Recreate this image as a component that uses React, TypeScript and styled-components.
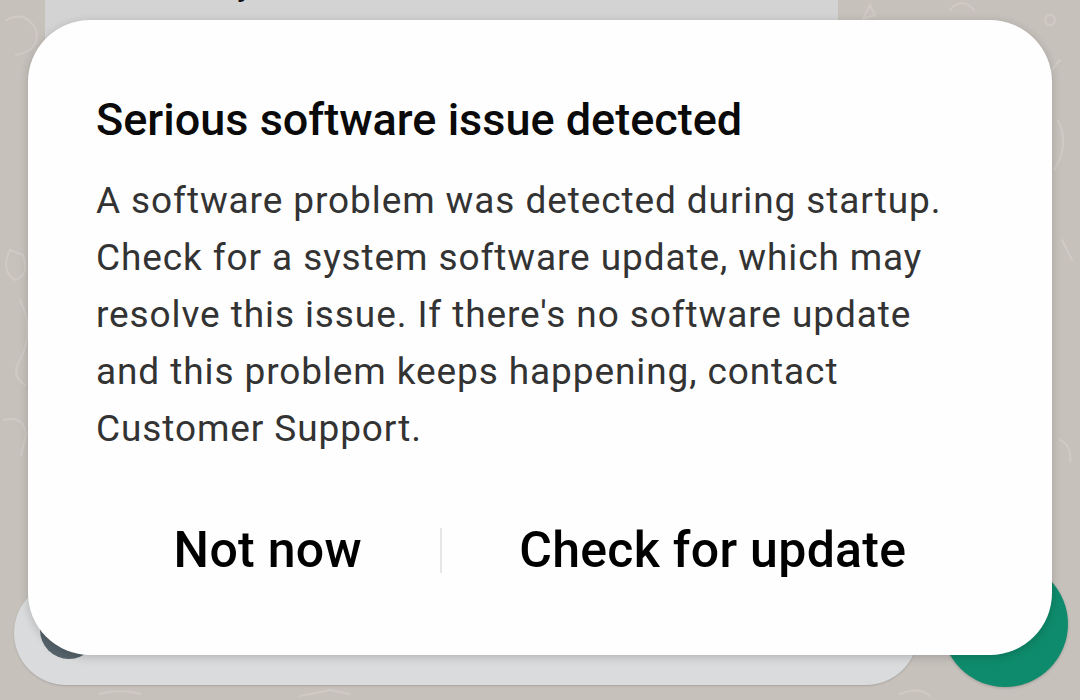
import styled, { createGlobalStyle } from "styled-components";

const GlobalStyle = createGlobalStyle`
  html, body {
    margin: 0;
    padding: 0;
    background: #c7c1bc;
  }
  * {
    box-sizing: border-box;
  }
`

const Doodles = () => (
  <DoodleLayer viewBox="0 0 1080 700" preserveAspectRatio="none">
    <g fill="none" stroke="#d0cac5" strokeWidth="2" strokeLinecap="round">
      <path d="M6 20 q20 -10 30 10 q5 20 -20 25" />
      <path d="M10 250 q-10 20 5 30 q15 -5 8 -25 z" />
      <path d="M20 300 q15 30 0 60 q-10 15 5 25" />
      <path d="M4 420 q20 -5 22 15 l-5 20" />
      <path d="M870 5 l5 10 l-12 4 z" />
      <path d="M950 10 q12 -14 24 0" />
      <circle cx="1050" cy="20" r="5" />
      <path d="M1060 60 q-20 20 -10 50" />
      <path d="M1058 120 q12 25 -4 50" />
      <path d="M1062 240 l10 20" />
      <path d="M1060 440 q12 5 10 22" />
      <path d="M100 694 q20 -6 40 0" />
      <path d="M300 696 l30 -6 l20 4" />
      <path d="M900 694 q20 -8 30 2" />
    </g>
  </DoodleLayer>
)

export default function App() {
  return (
    <>
      <GlobalStyle />
      <Screen>
        <Doodles />

        <ChatCard>
          <ChatLine>Today</ChatLine>
        </ChatCard>

        <Composer>
          <InputBar>
            <EmojiDot />
          </InputBar>
          <SendButton />
        </Composer>

        <Dialog>
          <Title>Serious software issue detected</Title>
          <Message>
            A software problem was detected during startup. Check for a system
            software update, which may resolve this issue. If there's no
            software update and this problem keeps happening, contact Customer
            Support.
          </Message>
          <Actions>
            <ActionButton>Not now</ActionButton>
            <Divider />
            <ActionButton>Check for update</ActionButton>
          </Actions>
        </Dialog>
      </Screen>
    </>
  );
}

const Screen = styled.div`
  position: relative;
  display: flex;
  flex-direction: column;
  justify-content: space-between;

  width: 1080px;
  height: 700px;
  overflow: hidden;

  background: #c7c1bc;
  font-family: Roboto, "Noto Sans", sans-serif;
`

const DoodleLayer = styled.svg`
  position: absolute;
  inset: 0;
  width: 100%;
  height: 100%;
`

const ChatCard = styled.div`
  position: relative;
  width: 793px;
  height: 200px;
  margin-left: 45px;
  padding-left: 112px;

  background: #d3d3d3;
`

const ChatLine = styled.div`
  margin-top: -38px;
  font-size: 36px;
  line-height: 40px;
  color: #111;
`

const Composer = styled.div`
  position: relative;
  display: flex;
  align-items: flex-end;
  gap: 24px;

  padding: 0 12px 13px 14px;
`

const InputBar = styled.div`
  position: relative;
  width: 904px;
  height: 104px;
  margin-bottom: 2px;

  border-radius: 52px;
  background: #d9dbdc;
  box-shadow: 0 1px 2px rgba(0, 0, 0, 0.15);
`

const EmojiDot = styled.div`
  position: absolute;
  left: 26px;
  top: 20px;
  width: 58px;
  height: 58px;

  border-radius: 50%;
  background: #56636b;
`

const SendButton = styled.div`
  width: 126px;
  height: 126px;
  border-radius: 50%;
  background: #0e8b6c;
  box-shadow: 0 1px 3px rgba(0, 0, 0, 0.2);
`

const Dialog = styled.div`
  position: absolute;
  left: 28px;
  top: 20px;
  width: 1024px;
  height: 635px;
  padding: 74px 68px 0;

  border-radius: 62px;
  background: #fefefe;
  box-shadow: 0 2px 10px rgba(0, 0, 0, 0.18);
`

const Title = styled.h1`
  margin: 0;
  font-size: 45px;
  line-height: 52px;
  font-weight: 500;
  color: #0a0a0a;
`

const Message = styled.p`
  margin: 26px 0 0;
  font-size: 37px;
  line-height: 57px;
  letter-spacing: 0.9px;
  font-weight: 400;
  color: #333333;
`

const Actions = styled.div`
  display: flex;
  align-items: center;
  margin-top: 45px;
`

const ActionButton = styled.div`
  flex: 1 1 auto;
  text-align: center;

  font-size: 50px;
  line-height: 96px;
  letter-spacing: 0.3px;
  font-weight: 500;
  color: #000;
  white-space: nowrap;
`

const Divider = styled.div`
  flex: none;
  width: 2px;
  height: 45px;
  background: #e6e6e6;
`
